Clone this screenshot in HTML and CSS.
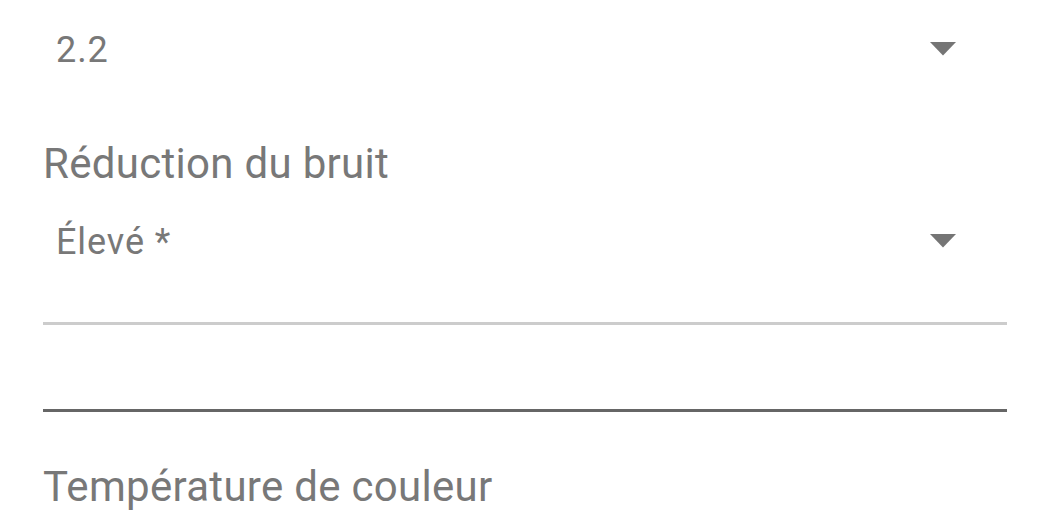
FILE: index.html
```html
<!DOCTYPE html>
<html lang="fr">
<head>
<meta charset="utf-8">
<link rel="stylesheet" href="styles.css">
</head>
<body>
<div class="form">
  <div class="spinner">
    <span class="value">2.2</span>
    <svg class="arrow" width="26" height="14" viewBox="0 0 26 14"><polygon points="0,0 26,0 13,13.5" fill="#757575"/></svg>
  </div>
  <div class="label">Réduction du bruit</div>
  <div class="spinner">
    <span class="value">Élevé *</span>
    <svg class="arrow" width="26" height="14" viewBox="0 0 26 14"><polygon points="0,0 26,0 13,13.5" fill="#757575"/></svg>
  </div>
  <div class="divider light"></div>
  <div class="divider dark"></div>
  <div class="label last">Température de couleur</div>
</div>
</body>
</html>
```
FILE: styles.css
```css
html, body {
  margin: 0;
  padding: 0;
  background: #ffffff;
}
body {
  font-family: Roboto, "Noto Sans", "Liberation Sans", sans-serif;
  color: #787878;
  overflow: hidden;
}
.form {
  display: flex;
  flex-direction: column;
  width: 964px;
  margin-left: 43px;
}
.spinner {
  display: flex;
  align-items: center;
  justify-content: space-between;
  height: 100px;
}
.value {
  font-size: 36px;
  line-height: 44px;
  letter-spacing: 0.9px;
  padding-left: 13px;
}
.arrow {
  display: block;
  margin-right: 51px;
  margin-bottom: 2px;
}
.label {
  font-size: 42px;
  line-height: 56px;
  letter-spacing: 0.3px;
  margin-top: 36px;
}
.divider {
  height: 3px;
}
.divider.light {
  background: #cccccc;
  margin-top: 30px;
}
.divider.dark {
  background: #666666;
  margin-top: 84px;
}
.label.last {
  margin-top: 47px;
}
```
